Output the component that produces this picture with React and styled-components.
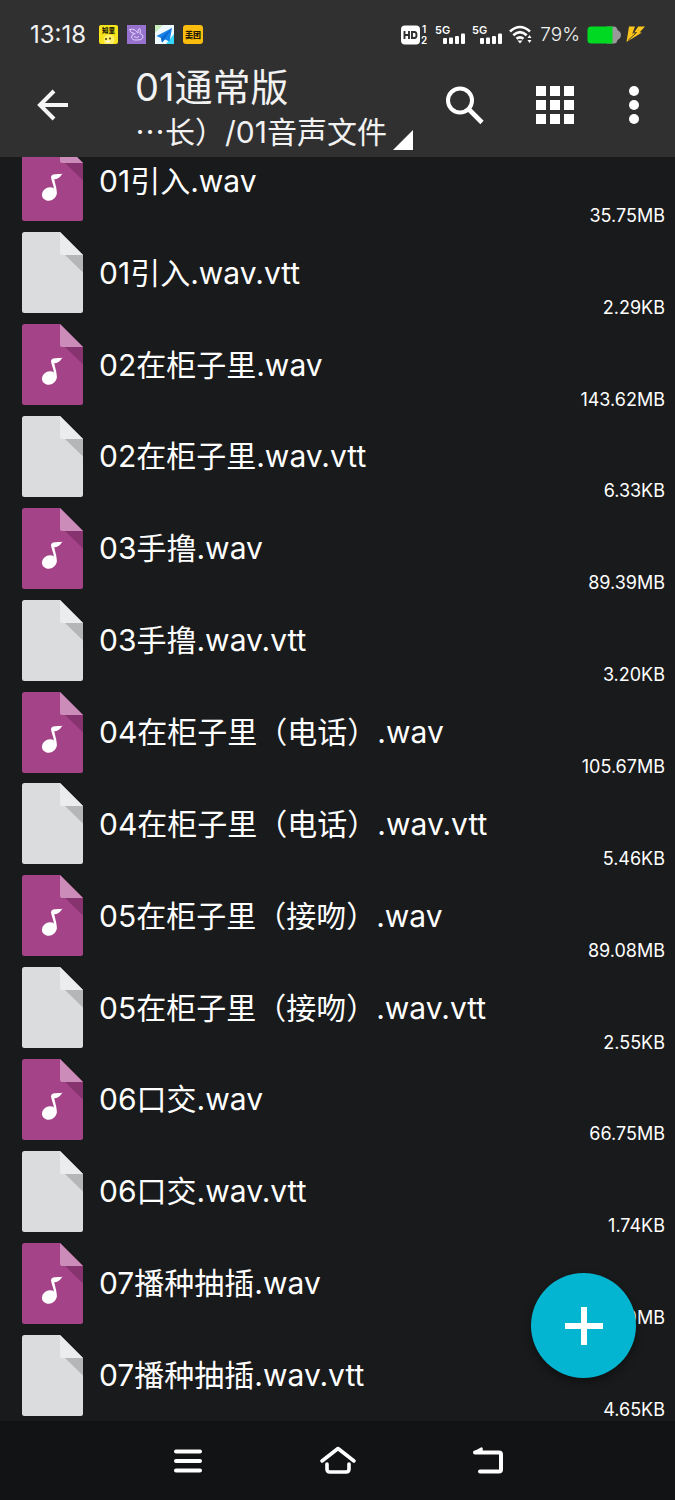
import React from 'react'
import styled, { createGlobalStyle } from 'styled-components'

const GlobalStyle = createGlobalStyle`
    * {
        box-sizing: border-box;
    }

    body {
        margin: 0;
        background: #191a1b;
        color: #fff;
        font-family: Inter, "Noto Sans CJK SC", sans-serif;
    }

    button {
        padding: 0;
        border: none;
        background: none;
        color: inherit;
        font: inherit;
        cursor: pointer;
    }

    svg {
        display: block;
        flex: none;
    }
`

const Screen = styled.div`
    display: flex;
    flex-direction: column;
    height: 100vh;
`

const Top = styled.header`
    background: #303030;
    color: #f2f2f2;
`

const StatusBar = styled.div`
    display: flex;
    justify-content: space-between;
    align-items: center;
    height: 53px;
    padding: 16px 30px 0;
`

const StatusGroup = styled.div`
    display: flex;
    align-items: center;
    gap: ${({$wide}) => ($wide ? '9px' : '7px')};
`

const Clock = styled.time`
    font-size: 24px;
    line-height: 24px;
    margin-right: 4px;
`

const Percent = styled.span`
    font-size: 19px;
    line-height: 24px;
    font-weight: 300;
`

const Toolbar = styled.div`
    display: flex;
    align-items: center;
    height: 104px;
    padding: 0 29px 0 36px;
`

const IconButton = styled.button`
    display: flex;
    justify-content: center;
    align-items: center;
`

const Heading = styled.div`
    flex: 1;
    min-width: 0;
    margin-left: 65px;
    padding-top: 8px;
`

const Title = styled.h1`
    margin: 0;
    font-size: 38px;
    line-height: 46px;
    font-weight: 400;
`

const PathButton = styled.button`
    display: flex;
    align-items: flex-end;
    gap: 6px;
    font-size: 30px;
    line-height: 44px;
    white-space: nowrap;

    svg {
        margin-bottom: 4px;
    }
`

const Actions = styled.div`
    display: flex;
    align-items: center;
    gap: 48px;
`

const Body = styled.main`
    position: relative;
    flex: 1;
    min-height: 0;
    display: flex;
`

/* the list is scrolled a little, its first row is partly under the toolbar */
const Scroller = styled.div`
    flex: 1;
    display: flex;
    flex-direction: column;
    overflow: hidden;
`

const List = styled.ul`
    flex: 1 0 auto;
    display: grid;
    grid-auto-rows: 1fr;
    margin: -22px 0 0;
    padding: 0;
    list-style: none;
`

const Row = styled.a`
    display: flex;
    align-items: center;
    height: 100%;
    padding: 0 10px 0 22px;
    color: #fff;
    text-decoration: none;
`

const Name = styled.span`
    flex: 1;
    margin-left: 16px;
    font-size: 30px;
    line-height: 40px;
    white-space: nowrap;
`

const Size = styled.span`
    align-self: flex-end;
    font-size: 18px;
    line-height: 22px;
`

const AddButton = styled.button`
    && {
        position: absolute;
        right: 39px;
        bottom: 43px;
        display: flex;
        justify-content: center;
        align-items: center;
        width: 105px;
        height: 105px;
        border-radius: 50%;
        background: #04b5d1;
        box-shadow: 0 4px 8px rgba(0, 0, 0, 0.4);
    }
`

const NavBar = styled.nav`
    display: flex;
    justify-content: center;
    align-items: center;
    gap: 110px;
    height: 79px;
    background: #121315;
`

const NavButton = styled(IconButton)`
    width: 40px;
    height: 40px;
`

const files = [
    { name: '01引入.wav', size: '35.75MB' },
    { name: '01引入.wav.vtt', size: '2.29KB' },
    { name: '02在柜子里.wav', size: '143.62MB' },
    { name: '02在柜子里.wav.vtt', size: '6.33KB' },
    { name: '03手撸.wav', size: '89.39MB' },
    { name: '03手撸.wav.vtt', size: '3.20KB' },
    { name: '04在柜子里（电话）.wav', size: '105.67MB' },
    { name: '04在柜子里（电话）.wav.vtt', size: '5.46KB' },
    { name: '05在柜子里（接吻）.wav', size: '89.08MB' },
    { name: '05在柜子里（接吻）.wav.vtt', size: '2.55KB' },
    { name: '06口交.wav', size: '66.75MB' },
    { name: '06口交.wav.vtt', size: '1.74KB' },
    { name: '07播种抽插.wav', size: '98.19MB' },
    { name: '07播种抽插.wav.vtt', size: '4.65KB' },
]

const FileIcon = ({ audio }) => (
    <svg width="61" height="81" viewBox="0 0 61 81" aria-hidden="true">
        <path d="M2.5 0H38L61 23V78.5Q61 81 58.5 81H2.5Q0 81 0 78.5V2.5Q0 0 2.5 0Z" fill={audio ? '#a54388' : '#dbdcde'} />
        <path d="M43 23H61V40.500Z" fill={audio ? '#87336f' : '#b5b6b7'} />
        <path d="M38 0L61 23H40Q38 23 38 21Z" fill={audio ? '#cc8cb9' : '#ebecee'} />
        {audio && (
            <>
                <ellipse cx="27.300" cy="54" rx="7.500" ry="6.600" transform="rotate(-25 27.300 54)" fill="#fff" />
                <path d="M29 37C30 33.500 34 34.500 40.500 33.800C38.500 35.500 38 39 32.300 39.200C33 44 35.500 49 34.500 55L31.500 52.500C33 47 29.500 42 29 37Z" fill="#fff" />
            </>
        )}
    </svg>
)

const Signal = () => (
    <svg width="30" height="28" viewBox="0 -4 30 28" fill="#fff" aria-hidden="true">
        <text x="0" y="9" fontSize="11" fontWeight="600">5G</text>
        <rect x="8" y="13" width="4" height="6" rx="1" />
        <rect x="14" y="12.500" width="4" height="6.500" rx="1" />
        <rect x="20" y="11" width="4" height="8" rx="1" />
        <rect x="26" y="8.500" width="4" height="10.500" rx="1" />
    </svg>
)

const AppBadges = () => (
    <>
        <svg width="19" height="19" viewBox="0 0 19 19" aria-hidden="true">
            <rect width="19" height="19" rx="2" fill="#f6e31d" />
            <text x="9.500" y="8" fontSize="6.500" fontWeight="900" textAnchor="middle" fill="#242000">知里</text>
            <circle cx="10" cy="15" r="5.500" fill="#fff06b" />
            <circle cx="7" cy="14" r="1" fill="#4c3b00" />
            <circle cx="11" cy="13.500" r="1" fill="#4c3b00" />
            <path d="M6.500 16Q9 19 11.500 15.500Z" fill="#fff" />
        </svg>
        <svg width="19" height="19" viewBox="0 0 19 19" fill="none" stroke="#e9dcff" strokeWidth="0.9" aria-hidden="true">
            <rect width="19" height="19" fill="#9773cf" stroke="none" />
            <path d="M2.500 4.500Q8 3 11 8.500M2.500 4.500Q3 8 7.500 8.500M11 8Q10.500 4 12.500 3.500Q14 4.500 13 8.500Q16.500 9.500 16 12.500Q14.500 15.500 10 15Q5 15.500 4.500 12Q4.500 9 8.500 8.500M7 11.500L9.500 12.500L12 11.500" />
        </svg>
        <svg width="19" height="19" viewBox="0 0 19 19" aria-hidden="true">
            <rect width="19" height="19" fill="#eefaff" />
            <path d="M0 0H8L0 8Z" fill="#c8edbd" />
            <path d="M11 19L19 9V19Z" fill="#35d8fa" />
            <path d="M17 3L1.500 11L6 13L7 17.500L10 14.500L14.500 16.500Z" fill="#1583e9" />
            <path d="M6 13L17 3L9.500 14L7 17.500Z" fill="#0b68cd" />
        </svg>
        <svg width="20" height="19" viewBox="0 0 20 19" aria-hidden="true">
            <rect width="20" height="19" rx="3" fill="#fbbd0d" />
            <text x="10" y="12.500" fontSize="8" fontWeight="900" textAnchor="middle" fill="#221900">美团</text>
        </svg>
    </>
)

const App = () => {
    return (
        <Screen>
            <GlobalStyle />
            <Top>
                <StatusBar>
                    <StatusGroup $wide>
                        <Clock>13:18</Clock>
                        <AppBadges />
                    </StatusGroup>
                    <StatusGroup>
                        <svg width="27" height="28" viewBox="0 -4 27 28" fill="#fff" aria-hidden="true">
                            <rect y="0.500" width="19" height="19" rx="4" />
                            <path d="M3.500 6V14M8 6V14M3.500 10H8M11 7H13.500Q15.500 7 15.500 10Q15.500 13 13.500 13H11Z" stroke="#303030" strokeWidth="1.900" fill="none" />
                            <text x="21" y="8" fontSize="10" fontWeight="600">1</text>
                            <text x="20" y="19" fontSize="10" fontWeight="600">2</text>
                        </svg>
                        <Signal />
                        <Signal />
                        <svg width="24" height="19" viewBox="0 0 24 19" fill="none" stroke="#fff" strokeWidth="2.600" aria-hidden="true">
                            <path d="M1 6.500Q11 -2.500 21 6.500M4.300 10.300Q11 4 17.700 10.300M7.500 13.800Q11 10.800 14.500 13.800" />
                            <path d="M8.500 15.500H13.500L11 18.500ZM18.500 13L20.500 10L22.500 13ZM18.500 15L20.500 18L22.500 15Z" fill="#fff" stroke="none" />
                        </svg>
                        <Percent>79%</Percent>
                        <svg width="58" height="18" viewBox="0 0 58 18" aria-hidden="true">
                            <path d="M20 0.500H27Q30 0.500 30.500 4Q34 6 34 9Q34 12 30.500 14Q30 17.500 27 17.500H20Z" fill="#999" />
                            <path d="M4 0.500H25.500V17.500H4Q0.500 17.500 0.500 14V4Q0.500 0.500 4 0.500Z" fill="#00d921" />
                            <path d="M42 0.500H48L45 8.500L51 0.500H58L52.500 6.500H55L39.500 16Z" fill="#fbc51c" />
                            <path d="M50.500 0.500L46.500 7L49.500 6.500L41 14.500" stroke="#303030" strokeWidth="0.900" fill="none" />
                        </svg>
                    </StatusGroup>
                </StatusBar>
                <Toolbar>
                    <IconButton aria-label="Back">
                        <svg width="34" height="32" viewBox="0 0 34 32" fill="none" stroke="#f5f5f5" strokeWidth="4">
                            <path d="M18 2L4 16L18 30M4 16H32" />
                        </svg>
                    </IconButton>
                    <Heading>
                        <Title>01通常版</Title>
                        <PathButton>
                            <span>⋯长）/01音声文件</span>
                            <svg width="20" height="20" viewBox="0 0 20 20" aria-hidden="true">
                                <path d="M20 0V20H0Z" fill="#fff" />
                            </svg>
                        </PathButton>
                    </Heading>
                    <Actions>
                        <IconButton aria-label="Search">
                            <svg width="42" height="40" viewBox="0 0 42 40" fill="none" stroke="#fff">
                                <circle cx="14" cy="15.500" r="12" strokeWidth="4" />
                                <path d="M23 24.500L36 37.500" strokeWidth="4.600" />
                                <path d="M22 23.500L25 26.500" strokeWidth="3" />
                            </svg>
                        </IconButton>
                        <IconButton aria-label="Grid view">
                            <svg width="38" height="38" viewBox="0 0 38 38" fill="#fff">
                                {[0, 14, 28].map((y) => [0, 14, 28].map((x) => (
                                    <rect key={x + '-' + y} x={x} y={y} width="10" height="10" />
                                )))}
                            </svg>
                        </IconButton>
                        <IconButton aria-label="More">
                            <svg width="24" height="38" viewBox="0 0 24 38" fill="#fff">
                                <circle cx="12" cy="5" r="5" />
                                <circle cx="12" cy="19" r="5" />
                                <circle cx="12" cy="33" r="5" />
                            </svg>
                        </IconButton>
                    </Actions>
                </Toolbar>
            </Top>

            <Body>
                <Scroller>
                    <List>
                        {files.map((file) => (
                            <li key={file.name}>
                                <Row href="#">
                                    <FileIcon audio={file.name.endsWith('.wav')} />
                                    <Name>{file.name}</Name>
                                    <Size>{file.size}</Size>
                                </Row>
                            </li>
                        ))}
                    </List>
                </Scroller>
                <AddButton aria-label="Add">
                    <svg width="38" height="38" viewBox="0 0 38 38" fill="#fff">
                        <path d="M16 0H22V16H38V22H22V38H16V22H0V16H16Z" />
                    </svg>
                </AddButton>
            </Body>

            <NavBar>
                <NavButton aria-label="Recent apps">
                    <svg width="30" height="26" viewBox="0 0 30 26" stroke="#fff" strokeWidth="4" strokeLinecap="round">
                        <path d="M3 3.500H27M3 13H27M3 22.500H27" />
                    </svg>
                </NavButton>
                <NavButton aria-label="Home">
                    <svg width="38" height="30" viewBox="0 0 38 30" fill="none" stroke="#fff" strokeWidth="3.600" strokeLinecap="round" strokeLinejoin="round">
                        <path d="M3 15L19 2.500L35 15" />
                        <path d="M8 18V23Q8 26 11 26H27Q30 26 30 23V18" />
                    </svg>
                </NavButton>
                <NavButton aria-label="Go back">
                    <svg width="32" height="30" viewBox="0 0 32 30" fill="none" stroke="#fff" strokeWidth="4" strokeLinecap="round" strokeLinejoin="round">
                        <path d="M3 6.500H27Q29 6.500 29 8.500V23.500Q29 25.500 27 25.500H8" />
                        <path d="M3 6L9.500 2.500V6Z" strokeWidth="2.500" fill="#fff" />
                    </svg>
                </NavButton>
            </NavBar>
        </Screen>
    )
}

export default App
